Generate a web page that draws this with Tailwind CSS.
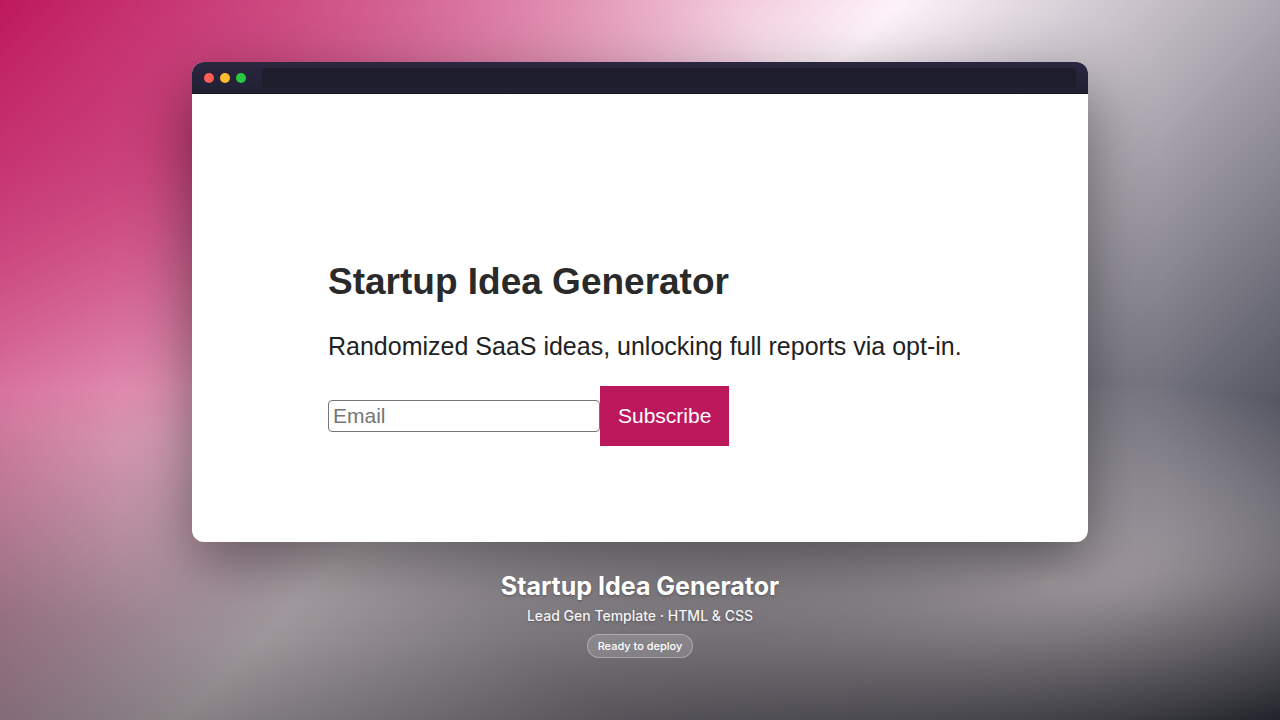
<!DOCTYPE html>
<html lang="en">
<head>
    <meta charset="UTF-8">
    <meta name="viewport" content="width=device-width, initial-scale=1.0">
    <title>Startup Idea Generator</title>
    <script src="https://cdn.jsdelivr.net/npm/@tailwindcss/browser@4"></script>
</head>
<body class="min-h-screen flex flex-col items-center justify-center bg-[linear-gradient(to_top,rgba(0,0,0,0.46),rgba(0,0,0,0.36)_14%,transparent_46%),radial-gradient(ellipse_44%_28%_at_82%_81%,rgba(253,242,248,0.92),transparent),radial-gradient(ellipse_44%_42%_at_18%_20%,rgba(190,24,93,0.5),transparent),linear-gradient(135deg,#be185d,#fdf2f8_45%,#111827)] font-['Inter',sans-serif]">
    <!-- Browser window -->
    <main class="w-7/10 rounded-xl overflow-hidden bg-white shadow-[0_24px_64px_rgba(0,0,0,0.48)]">
        <div class="h-8 flex items-center gap-4 px-3 bg-linear-to-b from-[#2a273f] to-[#212033] border-b border-[#161522]">
            <div class="flex gap-1.5">
                <span class="size-2.5 rounded-full bg-[#ff5f57]"></span>
                <span class="size-2.5 rounded-full bg-[#febc2e]"></span>
                <span class="size-2.5 rounded-full bg-[#28c840]"></span>
            </div>
            <div class="flex-1 h-5 rounded bg-[#1e1d2b]"></div>
        </div>

        <div class="pl-34 pr-12 pt-41 pb-24 font-['Liberation_Sans',Arial,sans-serif] text-[#222]">
            <h1 class="text-[37px] leading-12 font-bold mb-6 text-[#2a2a2a]">Startup Idea Generator</h1>
            <p class="text-[25px] leading-8 mb-6">Randomized SaaS ideas, unlocking full reports via opt-in.</p>
            <form class="flex items-center">
                <input type="email" aria-label="Email" placeholder="Email" class="w-68 h-8 px-1 border border-[#767676] rounded text-[21px] placeholder:text-[#757575]">
                <button type="submit" class="h-15 px-[18px] bg-[#be185d] text-white text-[21px]">Subscribe</button>
            </form>
        </div>
    </main>

    <!-- Caption -->
    <div class="mt-7 flex flex-col items-center text-white text-shadow-md">
        <h2 class="text-[25px] leading-8 font-bold">Startup Idea Generator</h2>
        <p class="mt-1 text-sm leading-5 font-medium text-white/95">Lead Gen Template · HTML &amp; CSS</p>
        <span class="mt-2 px-2.5 h-6 flex items-center rounded-full border border-white/30 bg-white/15 text-[11px] font-medium text-shadow-none">Ready to deploy</span>
    </div>
</body>
</html>
